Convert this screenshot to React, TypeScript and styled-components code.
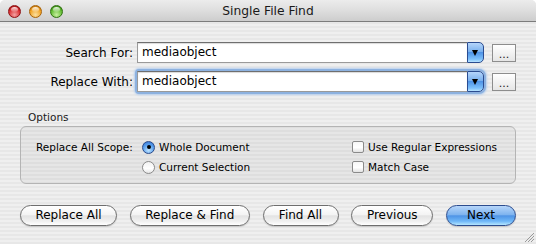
import styled, { createGlobalStyle } from "styled-components";

const GlobalStyle = createGlobalStyle`
  html, body {
    margin: 0;
    padding: 0;
    background: #ffffff;
  }
  * {
    box-sizing: border-box;
  }
`;

const font = `"DejaVu Sans", "Liberation Sans", sans-serif`;

const Window = styled.div`
  width: 536px;
  height: 244px;
  display: flex;
  flex-direction: column;
  font-family: ${font};
  color: #000;
  border-radius: 5px 5px 0 0;
  overflow: hidden;
  background: repeating-linear-gradient(
    to bottom,
    #efefef 0px,
    #efefef 2px,
    #e7e7e7 2px,
    #e7e7e7 4px
  );
  position: relative;
`;

const TitleBar = styled.div`
  height: 22px;
  flex-shrink: 0;
  display: flex;
  align-items: center;
  position: relative;
  background: linear-gradient(to bottom, #ececec 0%, #dedede 50%, #cdcdcd 100%);
  border-bottom: 1px solid #7c7c7c;
`;

const Lights = styled.div`
  display: flex;
  gap: 8px;
  padding-left: 8px;
  padding-top: 2px;
`;

const lightColors: Record<string, [string, string, string]> = {
  red: ["#f4a3a3", "#d8292b", "#8e1113"],
  yellow: ["#fbe0a0", "#f0a020", "#a86208"],
  green: ["#c9f0a0", "#5cb82c", "#2f7110"],
};

const Light = styled.span<{ $tone: keyof typeof lightColors }>`
  width: 13px;
  height: 13px;
  border-radius: 50%;
  position: relative;
  border: 1px solid ${(p) => lightColors[p.$tone][2]};
  background: radial-gradient(
    circle at 50% 80%,
    ${(p) => lightColors[p.$tone][0]} 0%,
    ${(p) => lightColors[p.$tone][1]} 60%,
    ${(p) => lightColors[p.$tone][2]} 100%
  );
  &::after {
    content: "";
    position: absolute;
    left: 2px;
    top: 1px;
    width: 7px;
    height: 5px;
    border-radius: 50%;
    background: linear-gradient(to bottom, rgba(255, 255, 255, 0.9), rgba(255, 255, 255, 0.1));
  }
`;

const Title = styled.div`
  position: absolute;
  left: 0;
  right: 0;
  top: 4px;
  text-align: center;
  font-size: 12.3px;
  color: #1a1a1a;
`;

const Body = styled.div`
  flex: 1;
  padding: 20px 20px 0 20px;
  display: flex;
  flex-direction: column;
`;

const FieldGrid = styled.div`
  display: grid;
  grid-template-columns: 113px 1fr 24px;
  column-gap: 4px;
  row-gap: 8px;
  align-items: center;
`;

const Label = styled.label`
  font-size: 12px;
  text-align: right;
  white-space: nowrap;
`;

const Combo = styled.div<{ $focused?: boolean }>`
  height: 21px;
  display: flex;
  margin-right: 4px;
  border-radius: 2px 5px 5px 2px;
  box-shadow: ${(p) =>
    p.$focused ? "0 0 0 2px #8db2e0, 0 0 2px 3px #b6cfee" : "none"};
`;

const ComboInput = styled.div`
  flex: 1;
  background: #fff;
  border: 1px solid #9a9a9a;
  border-top-color: #6f6f6f;
  border-right: none;
  box-shadow: inset 0 1px 1px rgba(0, 0, 0, 0.15);
  font-size: 12px;
  line-height: 19px;
  padding-left: 4px;
`;

const ComboArrow = styled.div`
  width: 17px;
  border: 1px solid #2b4c90;
  border-radius: 0 5px 5px 0;
  background: linear-gradient(
    to bottom,
    #b5d5fb 0%,
    #7ab1ee 45%,
    #4f93e6 50%,
    #7dc1fb 85%,
    #b8e3ff 100%
  );
  display: flex;
  align-items: center;
  justify-content: center;
  &::before {
    content: "";
    width: 0;
    height: 0;
    border-left: 3.5px solid transparent;
    border-right: 3.5px solid transparent;
    border-top: 6px solid #000;
    margin-left: -1px;
  }
`;

const DotsButton = styled.div`
  width: 24px;
  height: 18px;
  border: 1px solid #8d8d8d;
  background: linear-gradient(to bottom, #ffffff 0%, #f2f2f2 50%, #e6e6e6 100%);
  font-size: 11px;
  line-height: 20px;
  text-align: center;
  color: #222;
`;

const GroupLabel = styled.div`
  font-size: 10.5px;
  margin: 19px 0 3px 8px;
  line-height: 12px;
  color: #1a1a1a;
`;

const GroupBox = styled.div`
  height: 58px;
  border: 1px solid #b4b4b4;
  border-radius: 6px;
  background: rgba(0, 0, 0, 0.035);
  padding: 10px 15px 0 15px;
  display: flex;
  font-size: 10.5px;
`;

const ScopeLabel = styled.div`
  width: 106px;
  line-height: 20px;
  white-space: nowrap;
`;

const Column = styled.div<{ $width?: number }>`
  display: flex;
  flex-direction: column;
  width: ${(p) => (p.$width ? `${p.$width}px` : "auto")};
`;

const Choice = styled.div`
  height: 20px;
  display: flex;
  align-items: center;
  gap: 4px;
  white-space: nowrap;
`;

const Radio = styled.span<{ $on?: boolean }>`
  width: 13px;
  height: 13px;
  border-radius: 50%;
  display: flex;
  align-items: center;
  justify-content: center;
  border: 1px solid ${(p) => (p.$on ? "#2a4a8a" : "#8a8a8a")};
  background: ${(p) =>
    p.$on
      ? "radial-gradient(circle at 50% 75%, #bfe4ff 0%, #5aa0ee 55%, #2f6fcf 100%)"
      : "linear-gradient(to bottom, #f2f2f2, #ffffff 60%, #e4e4e4)"};
  &::after {
    content: "";
    width: 4px;
    height: 4px;
    border-radius: 50%;
    background: #000;
    display: ${(p) => (p.$on ? "block" : "none")};
  }
`;

const Check = styled.span`
  width: 12px;
  height: 12px;
  border-radius: 2px;
  border: 1px solid #8a8a8a;
  background: linear-gradient(to bottom, #f6f6f6, #ffffff 55%, #e2e2e2);
`;

const Spacer = styled.div`
  flex: 1;
`;

const ButtonRow = styled.div`
  margin-top: 21px;
  display: flex;
  justify-content: space-between;
`;

const PushButton = styled.div<{ $width: number; $default?: boolean }>`
  width: ${(p) => p.$width}px;
  height: 21px;
  border-radius: 11px;
  font-size: 12px;
  line-height: 19px;
  text-align: center;
  border: 1px solid ${(p) => (p.$default ? "#2c4c8e" : "#6e6e6e")};
  box-shadow: 0 1px 1px rgba(0, 0, 0, 0.15);
  background: ${(p) =>
    p.$default
      ? "linear-gradient(to bottom, #b7d6fa 0%, #7fb4ef 45%, #4f94e6 52%, #6fb7f8 80%, #b5e6ff 100%)"
      : "linear-gradient(to bottom, #ffffff 0%, #f4f4f4 45%, #e3e3e3 52%, #f0f0f0 80%, #ffffff 100%)"};
`;

const Grip = styled.svg`
  position: absolute;
  right: 2px;
  bottom: 2px;
`;

export default function App() {
  return (
    <>
      <GlobalStyle />
      <Window>
        <TitleBar>
          <Lights>
            <Light $tone="red" />
            <Light $tone="yellow" />
            <Light $tone="green" />
          </Lights>
          <Title>Single File Find</Title>
        </TitleBar>
        <Body>
          <FieldGrid>
            <Label>Search For:</Label>
            <Combo>
              <ComboInput>mediaobject</ComboInput>
              <ComboArrow />
            </Combo>
            <DotsButton>...</DotsButton>
            <Label>Replace With:</Label>
            <Combo $focused>
              <ComboInput>mediaobject</ComboInput>
              <ComboArrow />
            </Combo>
            <DotsButton>...</DotsButton>
          </FieldGrid>
          <GroupLabel>Options</GroupLabel>
          <GroupBox>
            <ScopeLabel>Replace All Scope:</ScopeLabel>
            <Column>
              <Choice>
                <Radio $on />
                Whole Document
              </Choice>
              <Choice>
                <Radio />
                Current Selection
              </Choice>
            </Column>
            <Spacer />
            <Column $width={148}>
              <Choice>
                <Check />
                Use Regular Expressions
              </Choice>
              <Choice>
                <Check />
                Match Case
              </Choice>
            </Column>
          </GroupBox>
          <ButtonRow>
            <PushButton $width={97}>Replace All</PushButton>
            <PushButton $width={120}>Replace &amp; Find</PushButton>
            <PushButton $width={76}>Find All</PushButton>
            <PushButton $width={82}>Previous</PushButton>
            <PushButton $width={70} $default>
              Next
            </PushButton>
          </ButtonRow>
        </Body>
        <Grip width="10" height="10" viewBox="0 0 10 10">
          <path d="M1 10 L10 1 M4 10 L10 4 M7 10 L10 7" stroke="#9a9a9a" strokeWidth="1" />
        </Grip>
      </Window>
    </>
  );
}
